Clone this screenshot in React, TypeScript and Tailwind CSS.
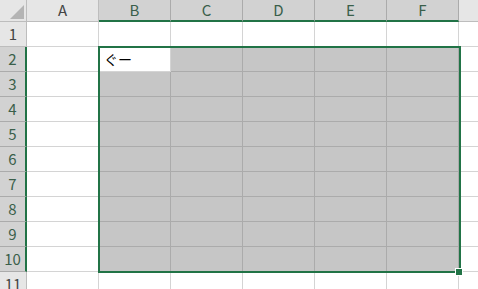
import React from "react";

const cols = ["A", "B", "C", "D", "E", "F"];
const rows = [1, 2, 3, 4, 5, 6, 7, 8, 9, 10, 11];

function isSel(r: number, c: number) {
  return r >= 2 && r <= 10 && c >= 1 && c <= 5;
}

export default function App() {
  return (
    <div
      className="relative w-[478px] h-[289px] overflow-hidden bg-white text-[#444]"
      style={{ fontFamily: '"Noto Sans CJK JP", "Noto Sans", sans-serif' }}
    >
      <div className="grid grid-cols-[27px_repeat(6,72px)_1fr]">
        {/* header row */}
        <div className="h-[22px] bg-[#e6e6e6] border-r border-b border-[#bdbdbd] relative">
          <svg width="27" height="22" className="absolute inset-0">
            <polygon points="24,5 24,19 10,19" fill="#b4b4b4" />
          </svg>
        </div>
        {cols.map((c, i) => {
          const sel = i >= 1;
          return (
            <div
              key={c}
              className={`h-[22px] flex items-center justify-center text-[15px] border-r ${
                sel
                  ? "bg-[#d2d2d2] border-[#ababab] border-b-2 border-b-[#217346] text-[#3a5f4a]"
                  : "bg-[#e6e6e6] border-[#bdbdbd] border-b text-[#444]"
              }`}
            >
              {c}
            </div>
          );
        })}
        <div className="h-[22px] bg-[#e6e6e6] border-b border-[#bdbdbd]" />

        {rows.map((r) => {
          const rsel = r >= 2 && r <= 10;
          return (
            <React.Fragment key={r}>
              <div
                className={`h-[25px] flex items-center justify-center text-[15px] border-b ${
                  rsel
                    ? "bg-[#d2d2d2] border-[#ababab] border-r-2 border-r-[#217346] text-[#3a5f4a]"
                    : "bg-[#e6e6e6] border-[#bdbdbd] border-r text-[#444]"
                }`}
              >
                {r}
              </div>
              {cols.map((c, ci) => {
                const active = r === 2 && ci === 1;
                const sel = isSel(r, ci) && !active;
                return (
                  <div
                    key={c}
                    className={`h-[25px] border-r border-b text-[14px] text-black flex items-center pl-[5px] ${
                      sel ? "bg-[#c6c6c6] border-[#ababab]" : "bg-white border-[#d4d4d4]"
                    }`}
                  >
                    {active ? "ぐー" : ""}
                  </div>
                );
              })}
              <div className="h-[25px] border-b border-[#d4d4d4]" />
            </React.Fragment>
          );
        })}
      </div>

      {/* selection frame */}
      <div className="absolute left-[98px] top-[46px] w-[363px] h-[227px] border-2 border-[#217346]" />
      <div className="absolute left-[455px] top-[268px] w-[8px] h-[8px] bg-[#217346] border border-white" />
    </div>
  );
}
